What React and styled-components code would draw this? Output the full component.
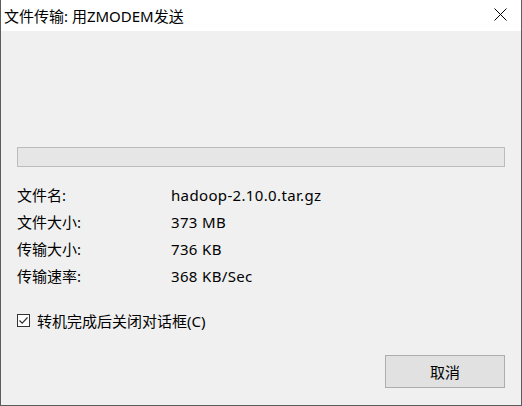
import { createGlobalStyle, styled } from 'styled-components';

const GlobalStyle = createGlobalStyle`
    html, body {
        margin: 0;
        padding: 0;
        background: #f0f0f0;
    }
    body {
        font-family: "Noto Sans", "Noto Sans CJK SC", sans-serif;
        color: #000;
    }
`;

const Window = styled.div`
    box-sizing: border-box;
    width: 522px;
    height: 406px;
    display: flex;
    flex-direction: column;
    background: #f0f0f0;
    border: 1px solid #5c5c5c;
    border-top: none;
`;

const TitleBar = styled.div`
    height: 31px;
    flex: none;
    display: flex;
    align-items: center;
    justify-content: space-between;
    background: #fff;
    padding-left: 3px;
    box-sizing: border-box;
`;

const Title = styled.span`
    font-size: 15px;
    line-height: 1;
    margin-top: 2px;
`;

const CloseButton = styled.div`
    width: 42px;
    height: 31px;
    display: flex;
    align-items: center;
    justify-content: center;
    padding-bottom: 2px;
    box-sizing: border-box;
`;

const Body = styled.div`
    flex: 1;
    display: flex;
    flex-direction: column;
    padding: 0 16px;
`;

const Progress = styled.div`
    margin-top: 116px;
    height: 20px;
    box-sizing: border-box;
    border: 1px solid #bcbcbc;
    background: #e6e6e6;
`;

const InfoGrid = styled.div`
    margin-top: 15px;
    display: grid;
    grid-template-columns: 154px 1fr;
    grid-auto-rows: 27px;
    align-items: center;
    font-size: 15px;
`;

const Label = styled.span`
    line-height: 1;
`;

const Value = styled.span`
    line-height: 1;
    letter-spacing: 0.35px;
`;

const CheckRow = styled.label`
    margin-top: 17px;
    height: 27px;
    display: flex;
    align-items: center;
    gap: 7px;
    font-size: 15px;
`;

const CheckBox = styled.span`
    width: 13px;
    height: 13px;
    box-sizing: border-box;
    border: 1px solid #333;
    background: #fff;
    display: flex;
    align-items: center;
    justify-content: center;
`;

const Footer = styled.div`
    margin-top: 21px;
    display: flex;
    justify-content: flex-end;
`;

const Button = styled.button`
    width: 120px;
    height: 33px;
    box-sizing: border-box;
    border: 1px solid #adadad;
    background: #e1e1e1;
    font-family: "Noto Sans CJK SC", sans-serif;
    font-size: 15px;
    color: #000;
    padding: 0;
`;

const rows = [
    ['文件名:', 'hadoop-2.10.0.tar.gz'],
    ['文件大小:', '373 MB'],
    ['传输大小:', '736 KB'],
    ['传输速率:', '368 KB/Sec'],
];

export default function App() {
    return (
        <>
            <GlobalStyle />
            <Window>
                <TitleBar>
                    <Title>文件传输: 用ZMODEM发送</Title>
                    <CloseButton>
                        <svg width="13" height="13" viewBox="0 0 13 13">
                            <path d="M0.5 0.5 L12.5 12.5 M12.5 0.5 L0.5 12.5" stroke="#000" strokeWidth="1" fill="none" />
                        </svg>
                    </CloseButton>
                </TitleBar>
                <Body>
                    <Progress />
                    <InfoGrid>
                        {rows.flatMap(([label, value]) => [
                            <Label key={label}>{label}</Label>,
                            <Value key={label + '-v'}>{value}</Value>,
                        ])}
                    </InfoGrid>
                    <CheckRow>
                        <CheckBox>
                            <svg width="11" height="11" viewBox="0 0 11 11">
                                <path d="M1.5 5.5 L4.2 8.2 L9.5 2.5" stroke="#333" strokeWidth="1.2" fill="none" />
                            </svg>
                        </CheckBox>
                        转机完成后关闭对话框(C)
                    </CheckRow>
                    <Footer>
                        <Button>取消</Button>
                    </Footer>
                </Body>
            </Window>
        </>
    );
}
